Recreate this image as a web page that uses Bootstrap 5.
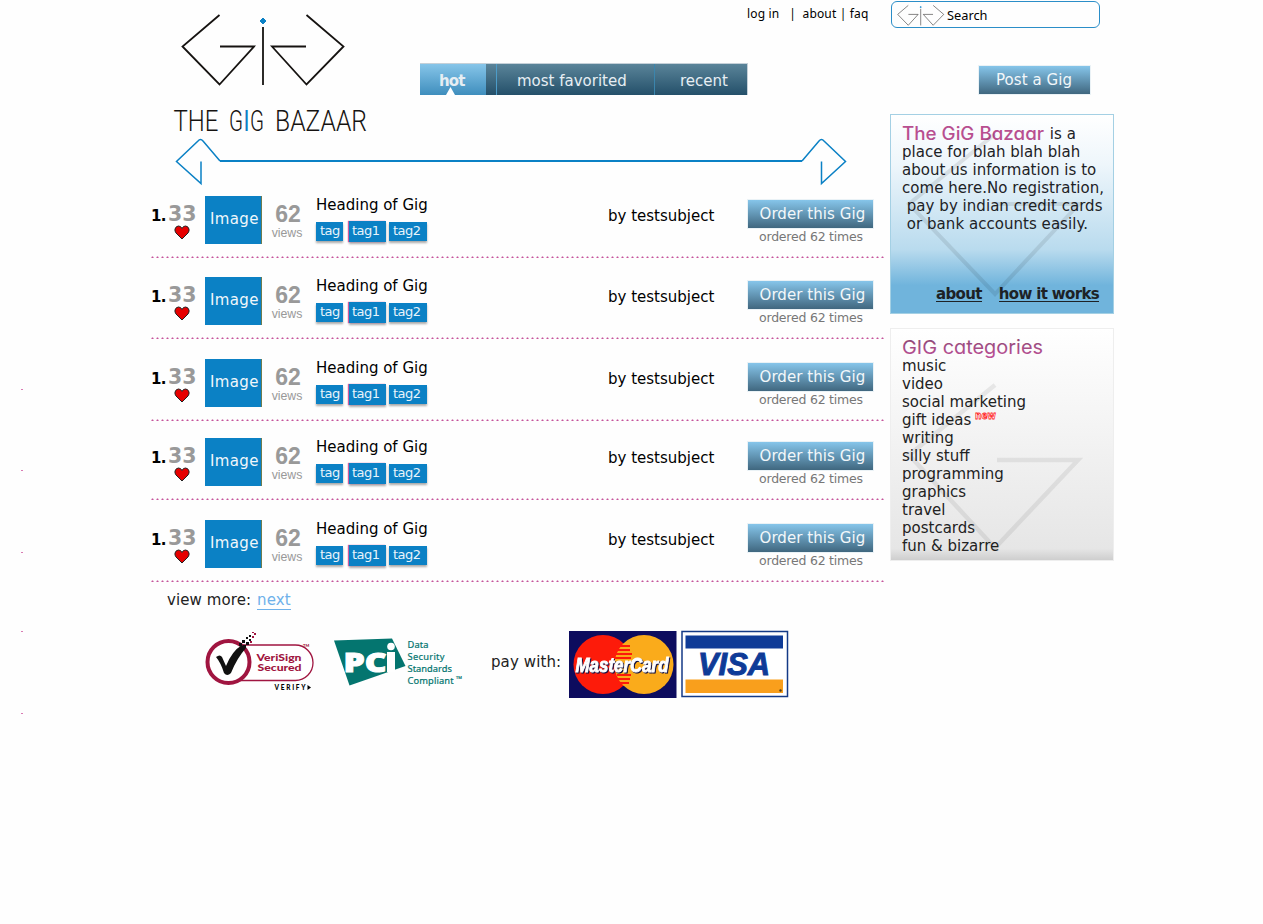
<!DOCTYPE html>
<html lang="en">
<head>
<meta charset="utf-8">
<meta name="viewport" content="width=device-width, initial-scale=1">
<title>The Gig Bazaar</title>
<link href="https://cdn.jsdelivr.net/npm/bootstrap@5.3.0/dist/css/bootstrap.min.css" rel="stylesheet">
<style>
body{font-family:"DejaVu Sans",Verdana,sans-serif;font-size:15px;line-height:18px;color:#222;background:#fefefe;overflow:hidden}
svg{display:block;flex:none}
.gutter{width:150px}
.main-col{width:740px}
.side-col{width:224px}
.masthead{height:138px}
.top-links{width:143px;font-family:"Noto Sans",sans-serif;font-size:12px;line-height:16px;color:#000;padding-top:6px;white-space:pre;letter-spacing:.16px;margin-left:-1px}
.tabs{margin-top:63px;width:328px;height:32px;background:linear-gradient(#5a8499,#24506a);border-top:1px solid #c5d0d8;border-right:1px solid #c5d0d8}
.tabs a{color:#e6eef3;line-height:34px;text-decoration:none}
.tab-hot{width:66px;background:linear-gradient(#86c5e9,#3f8ebd);font-weight:bold;padding-left:19px;letter-spacing:-.9px}
.tab-hot svg{left:26px;bottom:0}
.tab-fav{margin-left:10px;width:158px;border-left:1px solid #4c9cc9;padding-left:20px}
.tab-rec{border-left:1px solid #3b85ad;padding-left:25px}
.gig{height:62px;color:#000;background:radial-gradient(circle at 1.5px 1.5px,#c4559b 0,#cd6aa8 .7px,transparent 1.5px) 1px 60px/5px 3px repeat-x;width:735px;padding-left:1px}
.rank{width:17px;font-weight:bold;padding-top:11px;font-size:15px;letter-spacing:-.6px}
.votes{width:37px;color:#999;font-weight:bold;font-size:20.5px;line-height:22px;padding-top:7px}
.thumb{width:57px;height:48px;background:#0b81c5;color:#f0f7fb;line-height:46px;padding-left:5px;border-right:1px solid #6d7c50;white-space:nowrap;letter-spacing:.35px}
.views{width:50px;margin-right:4px;color:#999;font-family:"Liberation Sans",Arial,sans-serif;font-size:12.3px;line-height:14px;padding-top:6px}
.views b{font-size:23px;line-height:24px;padding-left:2px}
.about-gig{width:292px}
.tags{font-size:13px;line-height:17px;margin-top:8px}
.tags span{background:#0b81c5;color:#e8f4fb;height:19px;padding-left:4px;box-shadow:0 2px 2px #aaa;letter-spacing:-.5px}
.tag-a{width:27px}.tag-b{width:37px;margin:-1px 3px 0 6px}.tags .tag-b{height:21px;line-height:19px;padding-left:3px;box-shadow:-1px 0 1px #d35a9d,0 2px 2px #aaa}.tags .tag-c{width:38px}
.by{width:140px;padding-top:11px}
.grad-btn{background:linear-gradient(#86c5ea,#40677f);color:#f2f7fa;border:0;border-radius:0;height:28px;line-height:28px;font-size:15px;text-align:left;padding:0;box-shadow:0 0 0 1px #eaf2f6}
.order{width:125px;padding-left:11.5px;margin-top:4px;display:block;letter-spacing:.07px}
.ordered{font-size:12.5px;color:#777;padding-left:11px;line-height:18px;letter-spacing:-.22px}
.search{margin:1px 0 0 1px;width:209px;height:27px;border:1.5px solid #2b8ec8;border-radius:6px;font-family:"Noto Sans",sans-serif;font-size:12.8px;color:#000}
.post{width:111px;margin:38px 0 0 89px;padding-left:17px;display:block;letter-spacing:.07px}
.panel-info{margin-top:20px;width:224px;height:200px;border:1px solid #a4d0e4;background:linear-gradient(#fff 0,#eef6fb 25%,#b9dbee 68%,#70b4dc 86%,#70b4dc);padding:10px 0 0 11px;white-space:pre;color:#1d2226;letter-spacing:.04px}
.panel-cat{margin-top:14px;width:224px;height:233px;border:1px solid #eee;background:linear-gradient(#fff,#e6e6e6 95%,#cecece);padding:10px 0 0 11px}
.mark-bg{left:0;top:0}
.brand-h{font-family:Inter,sans-serif;font-feature-settings:"cv11";letter-spacing:0}
.brand-inline{vertical-align:-4px;overflow:visible}
.panel-links{font-weight:bold;margin:52px 0 0 34px;gap:17px;letter-spacing:-.65px}
.panel-links a{color:#1d2226;text-decoration:none;border-bottom:1px solid #1d2226;height:17px}
.more{padding:9px 0 0 17px;height:46px;letter-spacing:.1px}
.more a{color:#6eb1ea;text-decoration:none;border-bottom:1px solid #6eb1ea;margin-left:1px}
.pay{width:77px;padding-top:25px;letter-spacing:.1px}
</style>
</head>
<body>
<svg class="position-absolute" width="0" height="0"><defs>
<g id="gig" fill="none" stroke="#161311" stroke-width="1.8"><path d="M219.500 15 182.500 46.500 219.500 84.500 254 46.500H220M306.500 15 343.500 46.500 306.500 84.500 272 46.500H306"/><path d="M263 27V85"/><path d="M263 18l3 3-3 3-3-3z" fill="#0b81c5" stroke="#0b81c5" stroke-width="1"/></g>
</defs></svg>
<div class="d-flex">
<aside class="gutter flex-shrink-0"><svg width="150" height="720" fill="#d05aa0"><path d="M21 389h2v1h-2zM21 470h2v1h-2zM21 552h2v1h-2zM21 631h2v1h-2zM21 713h2v1h-2z" opacity=".8"/></svg></aside>
<main class="main-col flex-shrink-0">
<header class="masthead d-flex">
<svg width="270" height="138" viewBox="150 0 270 138"><use href="#gig"/>
<g font-family="Roboto" font-weight="300" font-size="30" fill="#161311"><text x="173.500" y="130.500" textLength="45" lengthAdjust="spacingAndGlyphs">THE</text><text x="229" y="130.500" textLength="14" lengthAdjust="spacingAndGlyphs">G</text><text x="243.500" y="130.500" fill="#0b81c5" font-weight="400" textLength="6" lengthAdjust="spacingAndGlyphs">I</text><text x="250" y="130.500" textLength="14" lengthAdjust="spacingAndGlyphs">G</text><text x="275" y="130.500" textLength="92" lengthAdjust="spacingAndGlyphs">BAZAAR</text></g></svg>
<nav class="tabs d-flex flex-shrink-0"><a class="tab-hot position-relative" href="#">hot<svg class="position-absolute" width="9" height="8"><path d="M4.500 0 9 8H0z" fill="#fff"/></svg></a><a class="tab-fav" href="#">most favorited</a><a class="tab-rec" href="#">recent</a></nav>
<div class="top-links">log in   |  about | faq</div>
</header>
<svg width="735" height="50" viewBox="150 138 735 50" fill="none" stroke="#0b81c5"><path d="M220 161H802" stroke-width="2"/><path d="M220 161 203 141Q200.500 138 198 141L176.500 161.500 201 183.500V161.500M802 161 819 141Q821.500 138 824 141L845.500 161.500 821.500 183.500V161.500" stroke-width="1.5"/></svg>
<section id="gigs"></section>
<div class="more">view more: <a href="#">next</a></div>
<footer class="d-flex">
<svg width="341" height="72" viewBox="150 628 341 72">
<rect x="212" y="645" width="101" height="35.500" rx="17.700" fill="#fff" stroke="#a01540" stroke-width="1.300"/>
<circle cx="228.500" cy="662" r="21" fill="#fff" stroke="#a01540" stroke-width="4"/>
<path d="M216 657q4-3 6 0l4 9q6-15 16-21l4 3q-9 10-15 25-4 4-7 0-3-10-8-16z" fill="#111"/>
<path d="M239 643h3v3h-3zM243 645h3v3h-3zM242 640h3v3h-3zM246 642h3v3h-3zM246 637h2v2h-2zM249 639h2v2h-2zM249 635h2v2h-2z" fill="#111"/><path d="M252 636h2v2h-2zM254 633h2v2h-2zM252 632h2v1h-2zM250 641h2v2h-2z" fill="#a01540"/>
<g font-family="Lato" font-weight="900" font-size="9.500" fill="#a01540"><text x="256.500" y="661" textLength="45" lengthAdjust="spacingAndGlyphs">VeriSign</text><text x="257.500" y="670.500" textLength="44" lengthAdjust="spacingAndGlyphs">Secured</text><text x="303" y="647" font-size="4">TM</text></g>
<text x="274.500" y="690" font-family="Lato" font-weight="900" font-size="6.500" textLength="31">VERIFY</text><path d="M307.500 685v5l3.500-2.500z"/>
<path d="M334 640.500 392 638.500 405.500 666 349.500 685.500z" fill="#04756f"/>
<g font-family="Open Sans" font-weight="800" font-size="27" fill="#fff"><text x="343.500" y="671.500" textLength="43" lengthAdjust="spacingAndGlyphs" stroke="#fff">PC</text><path d="M387 652h8v20h-8z"/><circle cx="391" cy="646.500" r="3.800"/></g>
<g font-family="Noto Sans" font-size="9.300" fill="#04756f" stroke="#04756f" stroke-width=".2"><text x="407.500" y="648" textLength="21">Data</text><text x="407.500" y="660" textLength="37">Security</text><text x="407.500" y="672" textLength="44.500">Standards</text><text x="407.500" y="684" textLength="46">Compliant</text><text x="456" y="679" font-size="4">TM</text></g>
</svg>
<div class="pay">pay with:</div>
<svg width="222" height="72" viewBox="568 628 222 72">
<rect x="569" y="631" width="107.500" height="67" fill="#0d0c5e"/><circle cx="603" cy="664.500" r="29.500" fill="#fd1b0a"/><circle cx="644" cy="664.500" r="29.500" fill="#faab1b"/>
<path d="M618 646h12M616 650h14M615 654h17M615 658h16M617 675h14M617 679h13M619 683h10" stroke="#fd1b0a" stroke-width="2"/>
<text x="575.500" y="671.500" font-family="Liberation Sans" font-style="italic" font-weight="700" font-size="19.500" fill="#fff" stroke="#fff" stroke-width=".9" textLength="93" lengthAdjust="spacingAndGlyphs" filter="drop-shadow(1.5px 1.5px 0 #111144)">MasterCard</text>
<rect x="682" y="631.500" width="105.500" height="65" fill="#fff" stroke="#143a86" stroke-width="1.500"/><rect x="685.500" y="635.500" width="97.500" height="13" fill="#0f3b97"/><rect x="685.500" y="679.500" width="97.500" height="13.500" fill="#f99f1c"/>
<text x="698" y="675" font-family="Liberation Sans" font-style="italic" font-weight="700" font-size="31" fill="#0f3b97" stroke="#0f3b97" stroke-width="1" textLength="72" lengthAdjust="spacingAndGlyphs">VISA</text><circle cx="780.500" cy="690.500" r="1.200" fill="#5a4010"/>
</svg>
</footer>
</main>
<aside class="side-col flex-shrink-0">
<div class="search d-flex align-items-center"><svg width="55" height="24" viewBox="892 3 55 24"><use href="#gig" transform="translate(845.500 1.100) scale(.286)"/></svg><span>Search</span></div>
<button class="btn grad-btn post">Post a Gig</button>
<section class="panel-info position-relative"><svg class="mark-bg position-absolute" width="222" height="198" viewBox="891 115 222 198" fill="none" stroke="#000" stroke-opacity=".09" stroke-width="4"><path d="M995 134 909 204 995 294 1079 204H997"/></svg><span class="brand-h"><svg class="d-inline brand-inline" width="143" height="18"><text x="0" y="14.500" fill="#b84f90" font-weight="500" font-size="18" textLength="142" lengthAdjust="spacingAndGlyphs">The GiG Bazaar</text></svg></span> is a
place for blah blah blah
about us information is to
come here.No registration,
 pay by indian credit cards
 or bank accounts easily.
<div class="panel-links d-flex"><a href="#">about</a><a href="#">how it works</a></div></section>
<section class="panel-cat position-relative"><svg class="mark-bg position-absolute" width="222" height="231" viewBox="891 329 222 231" fill="none" stroke="#000" stroke-opacity=".07" stroke-width="4.500"><path d="M995 385 909 455 995 548 1078 460H997"/></svg>
<div class="brand-h"><svg width="150" height="18" overflow="visible"><defs><linearGradient id="pk" x2="0" y2="1"><stop stop-color="#87486f"/><stop offset="1" stop-color="#c04f9a"/></linearGradient></defs><text x="0" y="14.500" fill="url(#pk)" font-size="19" font-weight="400" textLength="141" lengthAdjust="spacingAndGlyphs">GIG categories</text></svg></div>
<div>music</div><div>video</div><div>social marketing</div><div class="d-flex">gift ideas<svg width="26" height="18"><text x="4" y="8" font-family="DejaVu Sans" font-weight="bold" font-size="11" fill="#fff" stroke="#f22" stroke-width=".8" textLength="21" lengthAdjust="spacingAndGlyphs">new</text></svg></div><div>writing</div><div>silly stuff</div><div>programming</div><div>graphics</div><div>travel</div><div>postcards</div><div>fun &amp; bizarre</div>
</section>
</aside>
</div>
<script src="https://cdn.jsdelivr.net/npm/bootstrap@5.3.0/dist/js/bootstrap.bundle.min.js"></script>
<script>
// Five gigs; the number is the space above each one
document.getElementById('gigs').innerHTML=[8,19,20,17,20].map(gap=>`<article class="gig d-flex" style="margin-top:${gap}px"><div class="rank">1.</div><div class="votes">33<svg width="16" height="15" viewBox="0 0 16 15" style="margin-left:5.5px"><path d="M8 14 2 8Q.5 6 1 4 2 1 4.500 1 7 1 8 3.500 9 1 11.500 1 14 1 15 4q.5 2-1 4z" fill="#e60000" stroke="#222"/></svg></div><div class="thumb">Image</div><div class="views text-center"><b>62</b><br>views</div><div class="about-gig"><div>Heading of Gig</div><div class="tags d-flex"><span class="tag-a">tag</span><span class="tag-b">tag1</span><span class="tag-c">tag2</span></div></div><div class="by">by testsubject</div><div><button class="btn grad-btn order">Order this Gig</button><div class="ordered">ordered 62 times</div></div></article>`).join('');
</script>
</body>
</html>
